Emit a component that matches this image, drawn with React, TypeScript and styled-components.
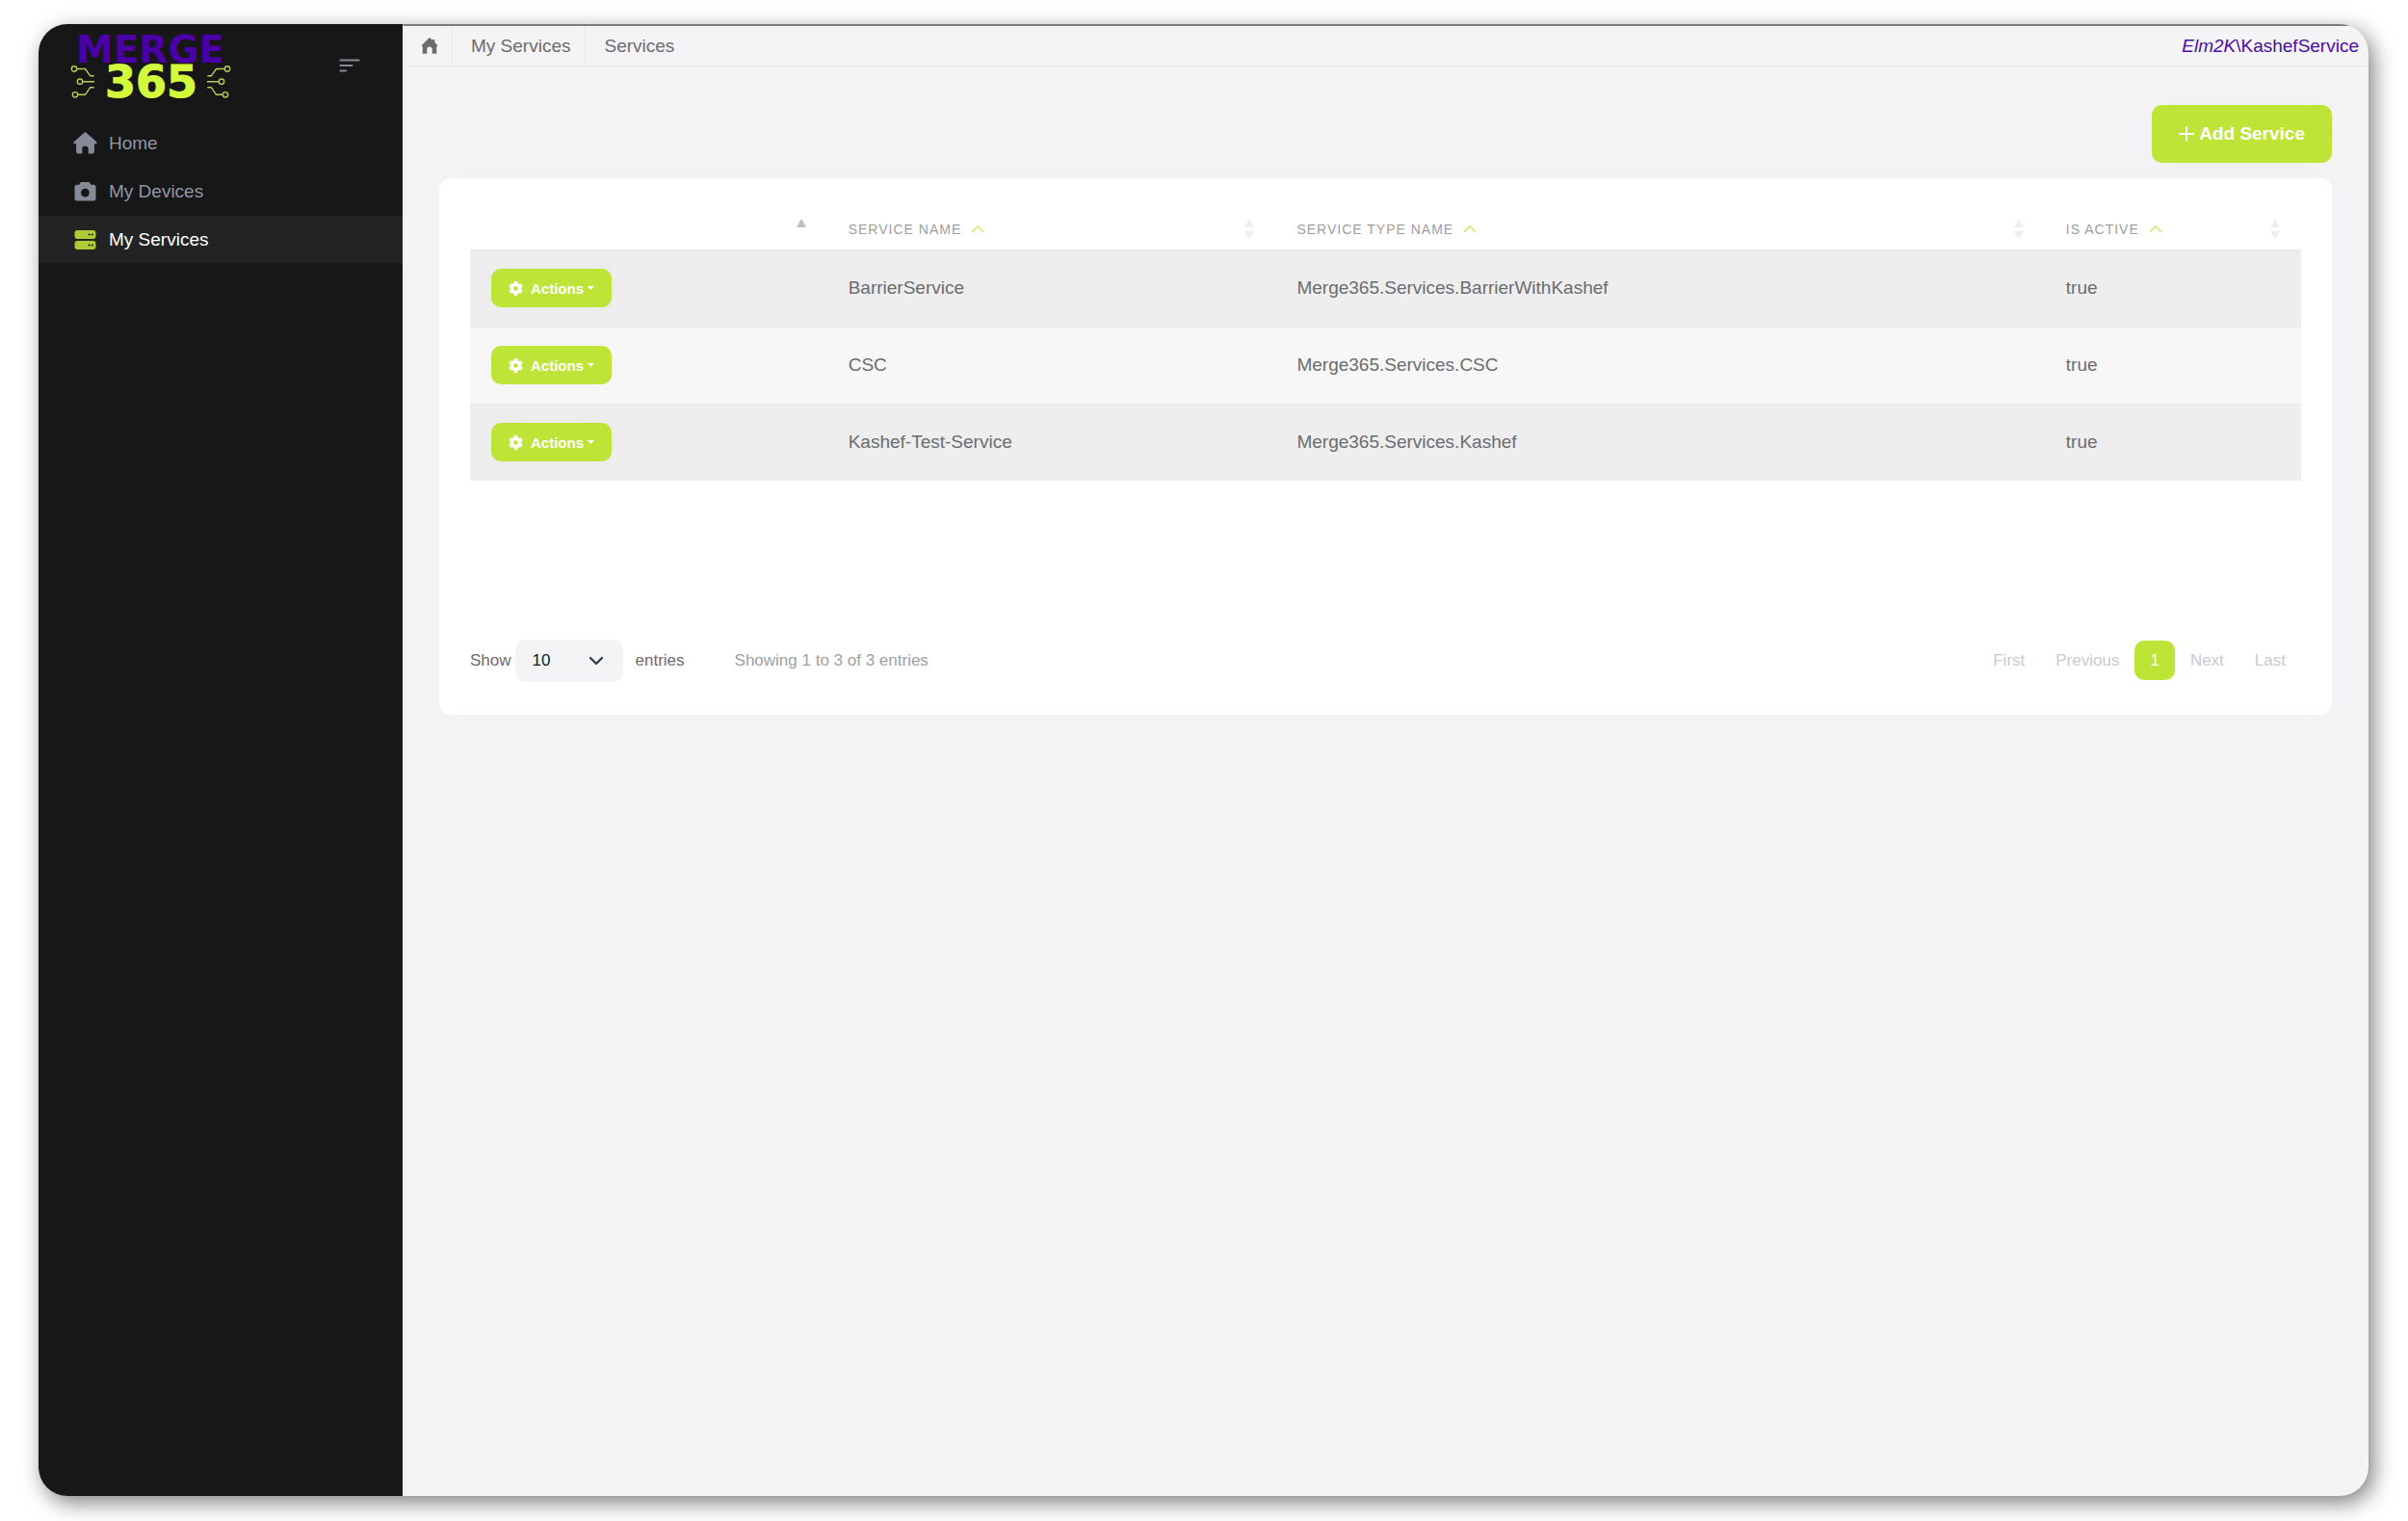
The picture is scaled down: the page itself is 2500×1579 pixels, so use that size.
import React from "react";
import styled, { createGlobalStyle, css } from "styled-components";
import { FaGear } from "react-icons/fa6";

const GlobalStyle = createGlobalStyle`
  *, *::before, *::after { box-sizing: border-box; }
  html, body, #root { height: 100%; }
  body {
    margin: 0;
    background: #fff;
    font-family: "Liberation Sans", Arial, Helvetica, sans-serif;
    font-size: 19px;
    color: #6b6c70;
  }
  button, select { font-family: inherit; }
`;

const lime = "#bee438";

const Desktop = styled.div`
  min-height: 100%;
  display: flex;
  padding: 25px 41px 26px 40px;
`;

const Window = styled.div`
  flex: 1;
  min-width: 0;
  display: flex;
  overflow: hidden;
  border-radius: 30px;
  background: #f4f4f6;
  box-shadow: 5px 7px 22px rgba(0, 0, 0, 0.5);
`;

const Sidebar = styled.aside`
  flex: none;
  width: 378px;
  background: #171717;
`;

const SidebarHead = styled.div`
  height: 99px;
  display: flex;
  align-items: flex-start;
  justify-content: space-between;
  padding: 12px 44px 0 32px;
`;

const ToggleButton = styled.button`
  display: flex;
  margin-top: 24px;
  padding: 0;
  border: 0;
  background: none;
  color: #868a98;
  cursor: pointer;
`;

const NavList = styled.ul`
  display: flex;
  flex-direction: column;
  gap: 1px;
  margin: 0;
  padding: 0;
  list-style: none;
`;

const NavLink = styled.a<{ $active?: boolean }>`
  display: flex;
  align-items: center;
  gap: 12px;
  height: 49px;
  padding: 0 36px;
  color: ${(p) => (p.$active ? "#fff" : "#9195a3")};
  background: ${(p) => (p.$active ? "#232323" : "transparent")};
  text-decoration: none;

  svg {
    flex: none;
    color: ${(p) => (p.$active ? "#aecb37" : "#868a98")};
  }
`;

const Main = styled.main`
  flex: 1;
  min-width: 0;
  border-top: 2px solid #7b7d7d;
  border-left: 1px solid #fff;
`;

const TopBar = styled.header`
  display: flex;
  align-items: stretch;
  justify-content: space-between;
  height: 42px;
  border-bottom: 1px solid #e8e8eb;
  padding-right: 10px;
`;

const Crumbs = styled.nav`
  display: flex;
`;

const Crumb = styled.a<{ $last?: boolean }>`
  display: flex;
  align-items: center;
  padding: 0 15px 0 19px;
  border-right: ${(p) => (p.$last ? "0" : "1px solid #e8e8eb")};
  color: #6b6c70;
  text-decoration: none;
`;

const User = styled.a`
  align-self: center;
  color: #4a0da3;
  text-decoration: none;
`;

const Content = styled.div`
  display: flex;
  flex-direction: column;
  padding: 40px 38px 0 37px;
`;

const solidButton = css`
  display: inline-flex;
  align-items: center;
  border: 0;
  border-radius: 10px;
  background: ${lime};
  color: #fff;
  font-weight: 700;
  cursor: pointer;
  box-shadow: 0 0 30px rgba(0, 0, 0, 0.02);
`;

const AddButton = styled.button`
  ${solidButton}
  align-self: flex-end;
  gap: 3px;
  height: 60px;
  padding: 0 28px 0 26px;
  font-size: 19px;
`;

const Card = styled.section`
  margin-top: 16px;
  padding: 32px 32px 34px;
  border-radius: 12px;
  background: #fff;
  box-shadow: 0 0 30px rgba(0, 0, 0, 0.02);
`;

const TableArea = styled.div`
  min-height: 446px;
`;

const Table = styled.table`
  width: 100%;
  table-layout: fixed;
  border-collapse: collapse;
`;

const HeadCell = styled.th<{ $width: string }>`
  width: ${(p) => p.$width};
  height: 42px;
  padding: 0 22px;
`;

const SortButton = styled.button`
  display: flex;
  align-items: center;
  width: 100%;
  height: 24px;
  padding: 0;
  border: 0;
  background: none;
  color: #9d9ea1;
  font-size: 14px;
  letter-spacing: 1px;
  text-transform: uppercase;
  cursor: pointer;
`;

const HeadLabel = styled.span`
  margin-right: 10px;
`;

const Arrows = styled.svg`
  margin-left: auto;
`;

const BodyRow = styled.tr`
  border-top: 1px solid #e6e9ec;
  background: #f7f7f7;

  &:nth-child(odd) {
    background: #eee;
  }
`;

const Cell = styled.td`
  height: 80px;
  padding: 0 22px;
`;

const ActionsButton = styled.button`
  ${solidButton}
  height: 40px;
  padding: 0 18px;
  font-size: 15px;

  svg + span {
    margin: 0 4px 0 8px;
  }
`;

const CardFooter = styled.div`
  display: flex;
  align-items: center;
  height: 45px;
  font-size: 17px;
`;

const LengthLabel = styled.label`
  display: flex;
  align-items: center;
`;

const SelectBox = styled.span`
  position: relative;
  display: flex;
  margin: 0 13px 0 4px;

  svg {
    position: absolute;
    right: 20px;
    top: 17px;
    pointer-events: none;
  }
`;

const LengthSelect = styled.select`
  width: 112px;
  height: 44px;
  padding: 0 18px;
  border: 0;
  border-radius: 10px;
  background: #f4f4f6;
  color: #16171a;
  font-size: 17px;
  appearance: none;
`;

const Info = styled.p`
  margin: 0 0 0 52px;
  color: #9fa0a3;
`;

const Pager = styled.nav`
  display: flex;
  margin-left: auto;
`;

const PageButton = styled.button<{ $current?: boolean }>`
  height: 41px;
  padding: 0 16px;
  border: 0;
  border-radius: 10px;
  background: ${(p) => (p.$current ? lime : "transparent")};
  color: ${(p) => (p.$current ? "#fff" : "#c9cacc")};
  font-size: 17px;
`;

const LogoDrawing = styled.svg`
  flex: none;
  overflow: visible;
`;

const LogoText = styled.text`
  font-family: "DejaVu Sans", Verdana, sans-serif;
  font-weight: 700;
  text-anchor: middle;
`;

const Logo = () => (
  <LogoDrawing width="168" height="68" viewBox="0 0 168 68" role="img" aria-label="Merge 365">
    <LogoText x="84" y="28" fontSize="39" fill="#4a00a6">MERGE</LogoText>
    <LogoText x="85" y="64" fontSize="46" fill="#d2fb3c" stroke="#d2fb3c" strokeWidth="1">365</LogoText>
    <g fill="none" stroke="#b4cd55" strokeWidth="1.4">
      <circle cx="5" cy="34.500" r="2.700" />
      <path d="M8 34.500h8.500l5.200 7.300h4" />
      <circle cx="11" cy="47.700" r="2.700" />
      <path d="M14 47.700h12" />
      <circle cx="6" cy="61.300" r="2.700" />
      <path d="M9 61.300h7.500l5.200-7.600h4" />
      <circle cx="164" cy="34.500" r="2.700" />
      <path d="M161 34.500h-8.500l-5.200 7.300h-4" />
      <circle cx="158" cy="47.700" r="2.700" />
      <path d="M155 47.700h-12" />
      <circle cx="162" cy="61.300" r="2.700" />
      <path d="M159 61.300h-6.500l-5.200-7.600h-4" />
    </g>
  </LogoDrawing>
);

const ToggleIcon = () => (
  <svg width="22" height="14" viewBox="0 0 22 14" stroke="currentColor" strokeWidth="2" strokeLinecap="round" aria-hidden>
    <path d="M1.500 1.500h19M1.500 7h12M1.500 12.500h5.500" />
  </svg>
);

const HomeIcon = () => (
  <svg width="25" height="23" viewBox="0 0 25 23" fill="currentColor" aria-hidden>
    <path d="M11.200.9a2 2 0 0 1 2.600 0l10.400 9.300c.9.800.4 2-.7 2h-1.600v8.300c0 1.100-.8 1.900-1.900 1.900h-4.300v-5.300c0-1.300-1-2.300-2.300-2.300h-1.800c-1.300 0-2.300 1-2.300 2.300v5.300H5c-1.100 0-1.900-.8-1.900-1.900v-8.300H1.500c-1.100 0-1.600-1.200-.7-2z" />
  </svg>
);

const CameraIcon = () => (
  <svg width="25" height="20" viewBox="0 0 25 20" fill="currentColor" fillRule="evenodd" aria-hidden>
    <path d="M8.800 0h6.900c.8 0 1.400.5 1.800 1.200l.8 1.500h2.900c1.300 0 2.300 1 2.300 2.300v12.300c0 1.300-1 2.300-2.300 2.300H3.800c-1.300 0-2.300-1-2.300-2.300V5c0-1.300 1-2.300 2.300-2.300h2.400L7 1.200C7.400.5 8 0 8.800 0zM12.400 6.700a4.400 4.400 0 1 0 0 8.800 4.400 4.400 0 0 0 0-8.800z" />
  </svg>
);

const ServerIcon = () => (
  <svg width="25" height="20" viewBox="0 0 25 20" aria-hidden>
    <rect x="1.500" y="0" width="22" height="9" rx="3" fill="currentColor" />
    <rect x="1.500" y="11" width="22" height="9" rx="3" fill="currentColor" />
    <g fill="#232323">
      <circle cx="16.600" cy="4.500" r="1.100" />
      <circle cx="19.800" cy="4.500" r="1.100" />
      <circle cx="16.600" cy="15.500" r="1.100" />
      <circle cx="19.800" cy="15.500" r="1.100" />
    </g>
  </svg>
);

const CrumbHomeIcon = () => (
  <svg width="16" height="17" viewBox="0 0 16 17" fill="currentColor" role="img" aria-label="Dashboard">
    <path d="M8 0l3 2.800V2h2.300v3L16 7.700v1.500h-.7v7.500h-4.600v-4.600c0-1.600-1-2.500-2.700-2.500s-2.700.9-2.700 2.500v4.600H.7V9.200H0V7.700z" />
  </svg>
);

const PlusIcon = () => (
  <svg width="20" height="20" viewBox="0 0 20 20" stroke="currentColor" strokeWidth="2" strokeLinecap="round" aria-hidden>
    <path d="M10 3v14M3 10h14" />
  </svg>
);

const SortIcon = ({ ascending }: { ascending?: boolean }) => (
  <Arrows width="10" height="22" viewBox="0 0 10 22" aria-hidden>
    <path d="M5 0l5 9H0z" fill={ascending ? "#bebfc0" : "#efeff0"} />
    {!ascending && <path d="M0 13h10l-5 9z" fill="#efeff0" />}
  </Arrows>
);

const UpIcon = () => (
  <svg width="14" height="8" viewBox="0 0 14 8" fill="none" stroke="#cbe967" strokeWidth="1.500" aria-hidden>
    <path d="M1 7l6-6 6 6" />
  </svg>
);

const DownIcon = () => (
  <svg width="16" height="10" viewBox="0 0 16 10" fill="none" stroke="#2d3843" strokeWidth="2.200" strokeLinecap="round" strokeLinejoin="round" aria-hidden>
    <path d="M2 2l6 6 6-6" />
  </svg>
);

const CaretIcon = () => (
  <svg width="7" height="4" viewBox="0 0 7 4" fill="currentColor" aria-hidden>
    <path d="M0 0h7L3.500 4z" />
  </svg>
);

const navItems = [
  { label: "Home", icon: <HomeIcon /> },
  { label: "My Devices", icon: <CameraIcon /> },
  { label: "My Services", icon: <ServerIcon />, active: true },
];

const columns = [
  { label: "", width: "19.5%" },
  { label: "Service Name", width: "24.5%" },
  { label: "Service Type Name", width: "42%" },
  { label: "Is Active", width: "14%" },
];

const services = [
  { name: "BarrierService", type: "Merge365.Services.BarrierWithKashef", active: true },
  { name: "CSC", type: "Merge365.Services.CSC", active: true },
  { name: "Kashef-Test-Service", type: "Merge365.Services.Kashef", active: true },
];

export default function App() {
  return (
    <>
      <GlobalStyle />
      <Desktop>
        <Window>
          <Sidebar>
            <SidebarHead>
              <Logo />
              <ToggleButton type="button" aria-label="Toggle menu">
                <ToggleIcon />
              </ToggleButton>
            </SidebarHead>
            <nav>
              <NavList>
                {navItems.map((item) => (
                  <li key={item.label}>
                    <NavLink href="#" $active={item.active}>
                      {item.icon}
                      {item.label}
                    </NavLink>
                  </li>
                ))}
              </NavList>
            </nav>
          </Sidebar>
          <Main>
            <TopBar>
              <Crumbs aria-label="Breadcrumb">
                <Crumb href="#"><CrumbHomeIcon /></Crumb>
                <Crumb href="#">My Services</Crumb>
                <Crumb href="#" $last>Services</Crumb>
              </Crumbs>
              <User href="#"><em>Elm2K</em>\KashefService</User>
            </TopBar>
            <Content>
              <AddButton type="button">
                <PlusIcon />
                Add Service
              </AddButton>
              <Card>
                <TableArea>
                  <Table>
                    <thead>
                      <tr>
                        {columns.map((column) => (
                          <HeadCell key={column.width} scope="col" $width={column.width}>
                            <SortButton type="button" aria-label={column.label || "Actions"}>
                              {column.label && (
                                <>
                                  <HeadLabel>{column.label}</HeadLabel>
                                  <UpIcon />
                                </>
                              )}
                              <SortIcon ascending={!column.label} />
                            </SortButton>
                          </HeadCell>
                        ))}
                      </tr>
                    </thead>
                    <tbody>
                      {services.map((service) => (
                        <BodyRow key={service.name}>
                          <Cell>
                            <ActionsButton type="button">
                              <FaGear size={15} aria-hidden />
                              <span>Actions</span>
                              <CaretIcon />
                            </ActionsButton>
                          </Cell>
                          <Cell>{service.name}</Cell>
                          <Cell>{service.type}</Cell>
                          <Cell>{String(service.active)}</Cell>
                        </BodyRow>
                      ))}
                    </tbody>
                  </Table>
                </TableArea>
                <CardFooter>
                  <LengthLabel>
                    Show
                    <SelectBox>
                      <LengthSelect defaultValue="10">
                        <option>10</option>
                        <option>25</option>
                        <option>50</option>
                      </LengthSelect>
                      <DownIcon />
                    </SelectBox>
                    entries
                  </LengthLabel>
                  <Info>Showing 1 to 3 of 3 entries</Info>
                  <Pager aria-label="Pagination">
                    <PageButton type="button">First</PageButton>
                    <PageButton type="button">Previous</PageButton>
                    <PageButton type="button" $current>1</PageButton>
                    <PageButton type="button">Next</PageButton>
                    <PageButton type="button">Last</PageButton>
                  </Pager>
                </CardFooter>
              </Card>
            </Content>
          </Main>
        </Window>
      </Desktop>
    </>
  );
}
